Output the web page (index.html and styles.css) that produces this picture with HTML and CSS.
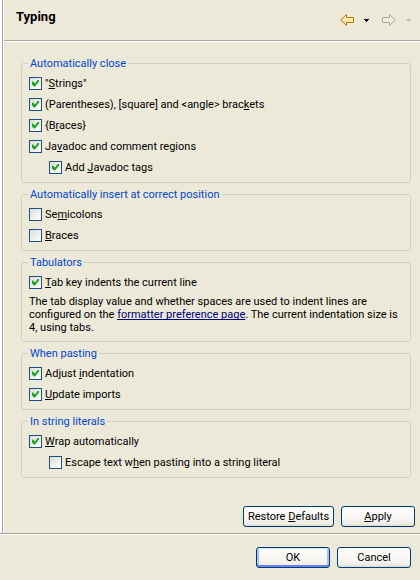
FILE: index.html
```html
<!DOCTYPE html>
<html lang="en">
<head>
<meta charset="utf-8">
<title>Typing</title>
<link rel="stylesheet" href="styles.css">
</head>
<body>
<form class="dialog">
  <main class="page">
    <header class="page-header">
      <h1>Typing</h1>
      <nav class="history">
        <button type="button" class="tool" aria-label="Back">
          <svg width="14" height="12" viewBox="0 0 14 12">
            <defs><linearGradient id="gold" x1="0" y1="0" x2="0" y2="1"><stop offset="0" stop-color="#fffbe0"/><stop offset="1" stop-color="#fbd774"/></linearGradient></defs>
            <path d="M6.500 0.500 0.700 6l5.800 5.500v-3h7v-5h-7z" fill="url(#gold)" stroke="#b8740c"/>
          </svg>
        </button>
        <button type="button" class="tool" aria-label="Back menu">
          <svg width="5" height="3" viewBox="0 0 5 3" shape-rendering="crispEdges"><path d="M0 0h5v1h-1v1h-1v1h-1v-1h-1v-1h-1z" fill="#000"/></svg>
        </button>
        <button type="button" class="tool tool-next" aria-label="Forward" disabled>
          <svg width="14" height="12" viewBox="0 0 14 12">
            <path d="M7.500 0.500 13.300 6l-5.800 5.500v-3h-7v-5h7z" fill="#efecdf" stroke="#aca899"/>
          </svg>
        </button>
        <button type="button" class="tool" aria-label="Forward menu" disabled>
          <svg width="5" height="3" viewBox="0 0 5 3" shape-rendering="crispEdges"><path d="M0 0h5v1h-1v1h-1v1h-1v-1h-1v-1h-1z" fill="#c5c2b8"/></svg>
        </button>
      </nav>
    </header>

    <div class="groups">
      <fieldset>
        <legend>Automatically close</legend>
        <label class="option"><input type="checkbox" checked><span>"<u>S</u>trings"</span></label>
        <label class="option"><input type="checkbox" checked><span>(Parentheses), [square] and &lt;angle&gt; brac<u>k</u>ets</span></label>
        <label class="option"><input type="checkbox" checked><span>{B<u>r</u>aces}</span></label>
        <label class="option"><input type="checkbox" checked><span>Ja<u>v</u>adoc and comment regions</span></label>
        <label class="option nested"><input type="checkbox" checked><span>Add <u>J</u>avadoc tags</span></label>
      </fieldset>

      <fieldset>
        <legend>Automatically insert at correct position</legend>
        <label class="option"><input type="checkbox"><span>Se<u>m</u>icolons</span></label>
        <label class="option"><input type="checkbox"><span><u>B</u>races</span></label>
      </fieldset>

      <fieldset>
        <legend>Tabulators</legend>
        <label class="option"><input type="checkbox" checked><span><u>T</u>ab key indents the current line</span></label>
        <p class="note">The tab display value and whether spaces are used to indent lines are configured on the <a href="#">formatter preference page</a>. The current indentation size is 4, using tabs.</p>
      </fieldset>

      <fieldset>
        <legend>When pasting</legend>
        <label class="option"><input type="checkbox" checked><span>Adjust <u>i</u>ndentation</span></label>
        <label class="option"><input type="checkbox" checked><span><u>U</u>pdate imports</span></label>
      </fieldset>

      <fieldset>
        <legend>In string literals</legend>
        <label class="option"><input type="checkbox" checked><span><u>W</u>rap automatically</span></label>
        <label class="option nested"><input type="checkbox"><span>Escape text w<u>h</u>en pasting into a string literal</span></label>
      </fieldset>
    </div>

    <div class="page-actions">
      <button type="button" class="btn btn-wide"><span>Restore <u>D</u>efaults</span></button>
      <button type="button" class="btn"><span><u>A</u>pply</span></button>
    </div>
  </main>

  <footer class="dialog-actions">
    <button type="submit" class="btn btn-default">OK</button>
    <button type="button" class="btn">Cancel</button>
  </footer>
</form>
</body>
</html>
```
FILE: styles.css
```css
:root {
  --face: #ece9d8;
  --shadow: #aca899;
  --group: #d0d0bf;
  --caption: #0046d5;
}

* { box-sizing: border-box; }

body {
  margin: 0;
  background: var(--face);
  color: #000;
  font: 11px/13px Roboto, "Liberation Sans", sans-serif;
}

.dialog {
  display: flex;
  flex-direction: column;
  min-height: 100vh;
}

.page {
  flex: 1;
  display: flex;
  flex-direction: column;
  border-left: 2px solid #fff;
  box-shadow: inset 1px 0 var(--shadow), inset 2px 0 #fff;
  padding-left: 2px;
}

.page-header {
  display: flex;
  align-items: center;
  justify-content: space-between;
  height: 42px;
  padding: 0 9px 2px 12px;
  box-shadow: inset 0 -1px #fff, inset 0 -2px var(--shadow);
}

h1 {
  margin: 0 0 6px;
  font-size: 13px;
  line-height: 16px;
}

.history {
  display: flex;
  align-items: center;
  gap: 10px;
}

.tool {
  display: flex;
  padding: 0;
  border: 0;
  background: none;
}

.tool svg { display: block; }
.tool-next { margin-left: 3px; }

.groups {
  display: flex;
  flex-direction: column;
  gap: 5px;
  padding: 15px 9px 0 17px;
}

fieldset {
  display: flex;
  flex-direction: column;
  gap: 5px;
  min-width: 0;
  margin: 0;
  padding: 5px 7px 7px;
  border: 1px solid var(--group);
  border-radius: 3px;
}

legend {
  margin-left: -1px;
  padding: 0 2px;
  color: var(--caption);
}

.option {
  display: flex;
  align-items: center;
  gap: 3px;
  height: 16px;
}

.nested { margin-left: 20px; }

input[type="checkbox"] {
  appearance: none;
  flex: none;
  width: 13px;
  height: 13px;
  margin: 0;
  padding: 2px;
  border: 1px solid #1c5180;
  background: linear-gradient(135deg, #dcdcd7, #fff);
}

input[type="checkbox"]:checked::before {
  content: "";
  display: block;
  width: 7px;
  height: 7px;
  background: #21a121;
  clip-path: polygon(0 2px, 1px 2px, 3px 4px, 6px 0, 7px 0, 7px 2px, 3px 7px, 2px 7px, 0 5px);
}

u {
  text-underline-offset: 1px;
  text-decoration-thickness: 1px;
  text-decoration-skip-ink: none;
}

.note { margin: 0; }

.note a {
  color: #000080;
  text-decoration-skip-ink: none;
}

.page-actions,
.dialog-actions {
  display: flex;
  justify-content: flex-end;
  gap: 7px;
}

.page-actions {
  margin-top: auto;
  padding: 0 5px 6px;
}

.dialog-actions {
  padding: 14px 9px 12px;
  box-shadow: inset 0 1px var(--shadow), inset 0 2px #fff;
}

.btn {
  width: 74px;
  height: 21px;
  padding: 0;
  border: 1px solid #003c74;
  border-radius: 3px;
  background: linear-gradient(#fff, #f5f4ef 70%, #ecebe6 90%, #dcd7cb);
  color: #000;
  font: inherit;
}

.btn-wide { width: 91px; }

.btn-default {
  box-shadow: inset 0 1px #cee7ff, inset 0 -2px #6982ee, inset 2px 0 #a9c3f2, inset -2px 0 #a9c3f2;
}
```
